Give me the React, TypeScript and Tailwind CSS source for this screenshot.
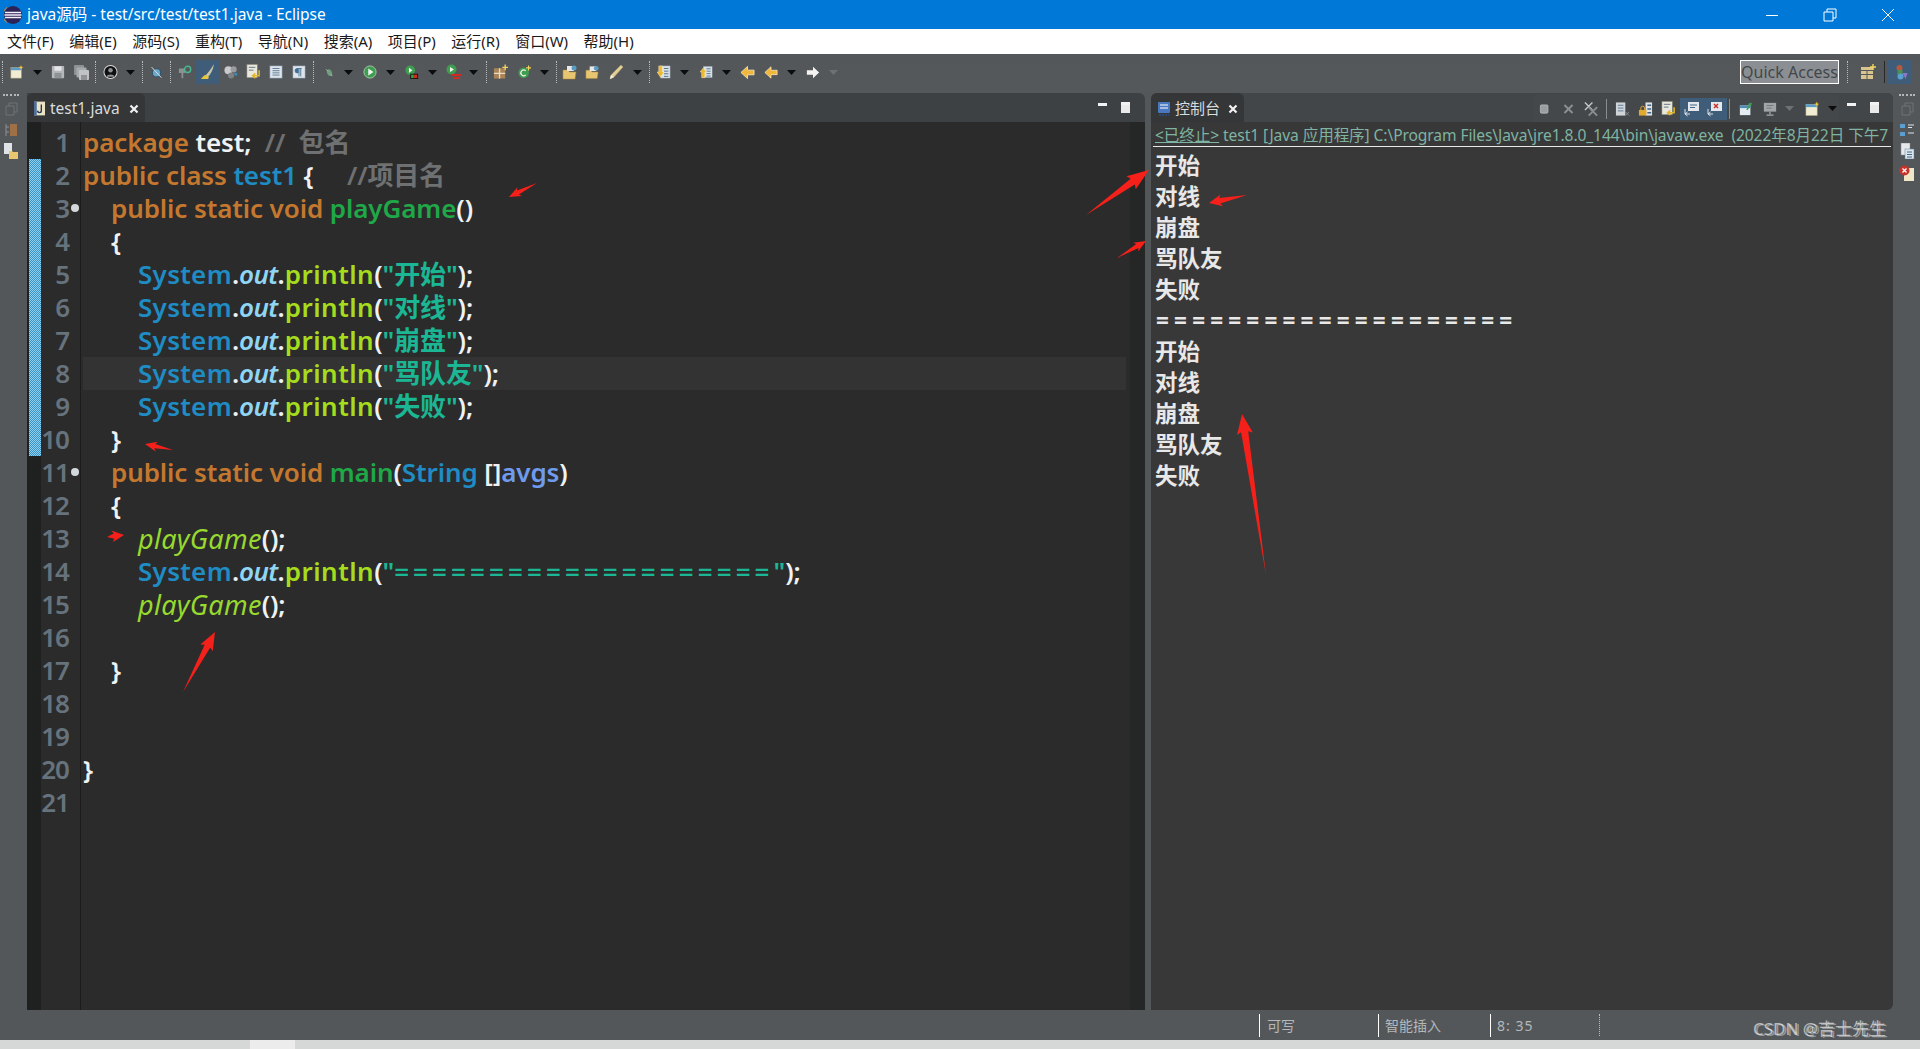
import React from 'react';

const UI = { fontFamily: '"Noto Sans", "Noto Sans CJK SC", sans-serif' };
const CODE = { fontFamily: '"Noto Sans", "Noto Sans CJK SC", sans-serif' };

const kw = 'text-[#c4782f]';
const comment = 'text-[#6e7071]';
const plain = 'text-[#eef2f5]';
const cls = 'text-[#1f8cc4]';
const sys = 'text-[#1f8cc4] tracking-[0.300px]';
const method = 'text-[#1fa748]';
const field = 'italic text-[#8fd6f4] tracking-[-0.600px]';
const println = 'text-[#a6dc1e] tracking-[0.500px]';
const str = 'text-[#1bb795]';
const strWide = 'text-[#1bb795] tracking-[4.100px]';
const call = 'italic font-normal text-[27px] tracking-[0.300px] text-[#97d92f]';
const param = 'text-[#6f9bee]';

type Tok = [string, string];

const printLine = (s: string, c = str): Tok[] => [
  ['System', sys],
  ['.', plain],
  ['out', field],
  ['.', plain],
  ['println', println],
  ['(', plain],
  ['"', str],
  [s, c],
  ['"', str],
  [');', plain],
];

const lines: { indent: number; toks: Tok[]; fold?: boolean; current?: boolean }[] = [
  { indent: 0, toks: [['package ', kw], ['test;', plain], ['  //  包名', comment]] },
  { indent: 0, toks: [['public class ', kw], ['test1', cls], [' {', plain], ['     //项目名', comment]] },
  { indent: 1, fold: true, toks: [['public static void ', kw], ['playGame', method], ['()', plain]] },
  { indent: 1, toks: [['{', plain]] },
  { indent: 2, toks: printLine('开始') },
  { indent: 2, toks: printLine('对线') },
  { indent: 2, toks: printLine('崩盘') },
  { indent: 2, current: true, toks: printLine('骂队友') },
  { indent: 2, toks: printLine('失败') },
  { indent: 1, toks: [['}', plain]] },
  { indent: 1, fold: true, toks: [['public static void ', kw], ['main', method], ['(', plain], ['String', cls], [' []', plain], ['avgs', param], [')', plain]] },
  { indent: 1, toks: [['{', plain]] },
  { indent: 2, toks: [['playGame', call], ['();', plain]] },
  { indent: 2, toks: printLine('====================', strWide) },
  { indent: 2, toks: [['playGame', call], ['();', plain]] },
  { indent: 0, toks: [] },
  { indent: 1, toks: [['}', plain]] },
  { indent: 0, toks: [] },
  { indent: 0, toks: [] },
  { indent: 0, toks: [['}', plain]] },
  { indent: 0, toks: [] },
];

const menus = ['文件(F)', '编辑(E)', '源码(S)', '重构(T)', '导航(N)', '搜索(A)', '项目(P)', '运行(R)', '窗口(W)', '帮助(H)'];
const output = ['开始', '对线', '崩盘', '骂队友', '失败'];

const Svg = ({ className = '', children }: { className?: string; children: React.ReactNode }) => (
  <svg viewBox="0 0 16 16" className={'h-[16px] shrink-0 ' + className}>
    {children}
  </svg>
);

const Dots = ({ className = '' }: { className?: string }) => (
  <div className={'h-[22px] w-px shrink-0 border-l border-dotted border-[#b9bdc0] ' + className} />
);

const Drop = ({ className = '', gray }: { className?: string; gray?: boolean }) => (
  <svg viewBox="0 0 9 5" className={'h-[5px] w-[9px] shrink-0 ' + className}>
    <path d="M0 0h9L4.5 5z" fill={gray ? '#6d7174' : '#0c0c0c'} />
  </svg>
);

// generic toolbar drawings
const NewFile = ({ className }: { className?: string }) => (
  <Svg className={className}>
    <rect x="1" y="3" width="12" height="12" fill="#f2ecd2" stroke="#a9a27e" strokeWidth=".6" />
    <rect x="1" y="3" width="12" height="3" fill="#5d9cc6" />
    <path d="M12.5 0l.8 2 2 .7-2 .8-.8 2-.7-2-2-.8 2-.7z" fill="#f4c63d" />
  </Svg>
);
const Save = ({ className }: { className?: string }) => (
  <Svg className={className}>
    <rect x="1" y="1" width="14" height="14" rx="1" fill="#b5b8ba" />
    <rect x="4" y="1.5" width="8" height="5" fill="#e4e5e6" />
    <rect x="4" y="9" width="8" height="6" fill="#8f9294" />
  </Svg>
);
const SaveAll = ({ className }: { className?: string }) => (
  <Svg className={className}>
    <rect x="1" y="1" width="10" height="10" rx="1" fill="#8e9193" />
    <rect x="3.5" y="3.5" width="10" height="10" rx="1" fill="#a7aaac" />
    <rect x="6" y="6" width="10" height="10" rx="1" fill="#c0c2c4" />
    <rect x="8" y="11" width="6" height="5" fill="#8f9294" />
  </Svg>
);
const Avatar = ({ className }: { className?: string }) => (
  <Svg className={className}>
    <circle cx="8" cy="8" r="7.5" fill="#d8dadb" />
    <circle cx="8" cy="8" r="6.5" fill="#101010" />
    <circle cx="8" cy="6" r="2.4" fill="#8d8f91" />
    <path d="M3.5 13c1-3 8-3 9 0z" fill="#8d8f91" />
  </Svg>
);
const Skip = ({ className }: { className?: string }) => (
  <Svg className={className}>
    <circle cx="8" cy="9" r="5" fill="#6ea6c8" stroke="#1f4a69" />
    <path d="M2 2l12 13" stroke="#d6dde2" strokeWidth="1.2" />
  </Svg>
);
const Tele = ({ className }: { className?: string }) => (
  <Svg className={className}>
    <path d="M1 4h7v5H6v6H4V9H1z" fill="#8d9092" />
    <circle cx="11" cy="5" r="3.5" fill="none" stroke="#48b98f" strokeWidth="1.6" />
  </Svg>
);
const Brush = ({ className }: { className?: string }) => (
  <Svg className={className}>
    <path d="M14 0C11 5 8 9 5 12l2 2C11 10 13 6 14 0z" fill="#c8c4a8" />
    <path d="M5 11c-2 1-3 3-4 4h7l1-2z" fill="#e8c63a" />
  </Svg>
);
const Sheep = ({ className }: { className?: string }) => (
  <Svg className={className}>
    <circle cx="5" cy="6" r="4.5" fill="#c8cacc" />
    <circle cx="11" cy="5" r="3.5" fill="#9a9da0" />
    <circle cx="8" cy="12" r="3.5" fill="#7f8285" />
    <rect x="12" y="9" width="3" height="3" fill="#3d8fb8" />
  </Svg>
);
const DocArrow = ({ className }: { className?: string }) => (
  <Svg className={className}>
    <rect x="1" y="0" width="11" height="14" fill="#e9e8dc" stroke="#8b8a7c" strokeWidth=".6" />
    <path d="M3 3h7M3 6h5" stroke="#5f6f88" />
    <path d="M14 6v6H8M10 9.5L7 12l3 2.5" fill="none" stroke="#e2b62c" strokeWidth="1.6" />
  </Svg>
);
const Lines = ({ className }: { className?: string }) => (
  <Svg className={className}>
    <rect x="1" y="1" width="14" height="14" fill="#dfe4ea" stroke="#6f8598" strokeWidth=".6" />
    <path d="M4 4h8M4 6.5h8M4 9h8M4 11.5h8" stroke="#4f7394" />
  </Svg>
);
const Pilcrow = ({ className }: { className?: string }) => (
  <Svg className={className}>
    <rect x="1" y="1" width="14" height="14" fill="#dfe4ea" stroke="#6f8598" strokeWidth=".6" />
    <path d="M7 4H6a2.500 2.500 0 0 0 0 5h1zM7 4h4M8 4v9M10 4v9" fill="#3f6e94" stroke="#3f6e94" />
  </Svg>
);
const Bug = ({ className }: { className?: string }) => (
  <Svg className={className}>
    <ellipse cx="8" cy="9" rx="3.500" ry="5" transform="rotate(-25 8 9)" fill="#6f9e7e" />
    <path d="M3 4l3 3M12 14l-2-3" stroke="#c4d3c9" />
  </Svg>
);
const Run = ({ className }: { className?: string }) => (
  <Svg className={className}>
    <circle cx="8" cy="8" r="7" fill="#3f9d50" stroke="#c9dcc9" strokeWidth=".8" />
    <path d="M6 4l6 4-6 4z" fill="#f1f4ee" />
  </Svg>
);
const Coverage = ({ className }: { className?: string }) => (
  <Svg className={className}>
    <circle cx="6" cy="6" r="5.500" fill="#3f9d50" />
    <path d="M4.500 3l4 3-4 3z" fill="#f1f4ee" />
    <rect x="6" y="10" width="9" height="6" fill="#111" />
    <rect x="7" y="11" width="3" height="4" fill="#2cab3d" />
    <rect x="10" y="11" width="4" height="4" fill="#d12a1e" />
  </Svg>
);
const External = ({ className }: { className?: string }) => (
  <Svg className={className}>
    <circle cx="5.500" cy="5.500" r="5" fill="#3f9d50" />
    <path d="M4 3l4 2.500-4 2.500z" fill="#f1f4ee" />
    <rect x="6" y="10" width="9" height="2" fill="#d12a1e" />
    <rect x="7" y="13" width="7" height="2" fill="#d12a1e" />
  </Svg>
);
const Pkg = ({ className }: { className?: string }) => (
  <Svg className={className}>
    <rect x="1" y="4" width="12" height="11" fill="#a98458" />
    <path d="M7 4v11M1 9.500h12" stroke="#ecdcc0" strokeWidth="1.4" />
    <path d="M13 0v6M10 3h6" stroke="#f4d65c" strokeWidth="1.400" />
  </Svg>
);
const NewClass = ({ className }: { className?: string }) => (
  <Svg className={className}>
    <circle cx="7" cy="9" r="6.500" fill="#3f9d50" />
    <path d="M9.500 6.500a3.500 3.500 0 1 0 0 5" fill="none" stroke="#eef4ea" strokeWidth="1.500" />
    <path d="M13 0v6M10 3h6" stroke="#f4d65c" strokeWidth="1.400" />
  </Svg>
);
const Folder = ({ className }: { className?: string }) => (
  <Svg className={className}>
    <path d="M1 6h5l1.500 2H14l-1 7H1z" fill="#e8c671" stroke="#a8873a" strokeWidth=".5" />
    <rect x="5" y="2" width="7" height="5" fill="#e6e8ea" />
    <circle cx="12" cy="4" r="2.500" fill="#5a9cc0" />
  </Svg>
);
const Pencil = ({ className }: { className?: string }) => (
  <Svg className={className}>
    <path d="M13 1l2 2L6 13l-4 2 1-4z" fill="#e2cf96" stroke="#b9a56c" strokeWidth=".5" />
    <path d="M2 15l1-4 3 2z" fill="#f4f2e8" />
  </Svg>
);
const NoteDown = ({ className, up }: { className?: string; up?: boolean }) => (
  <Svg className={className}>
    <rect x="4" y="1" width="11" height="14" fill="#d9e0e7" stroke="#7c8895" strokeWidth=".5" />
    <path d="M8 4h5M8 7h5M8 10h5M8 13h5" stroke="#44688a" />
    {up ? (
      <path d="M4 3l4 5H6v7H2V8H0z" fill="#edb931" stroke="#fff2c4" strokeWidth=".5" />
    ) : (
      <path d="M2 1h4v7h2l-4 6-4-6h2z" fill="#edb931" stroke="#fff2c4" strokeWidth=".5" />
    )}
  </Svg>
);
const Back = ({ className, color = '#f0b73a' }: { className?: string; color?: string }) => (
  <Svg className={className}>
    <path d="M8 2v4h7v5H8v4L1 8.500z" fill={color} stroke="#fdf1cf" strokeWidth=".8" />
  </Svg>
);
const Forward = ({ className }: { className?: string }) => (
  <Svg className={className}>
    <path d="M8 2v4H1v5h7v4l7-6.500z" fill="#f3f3f3" />
  </Svg>
);
const Perspective = ({ className }: { className?: string }) => (
  <Svg className={className}>
    <rect x="1" y="3" width="12" height="12" fill="#d9c48d" />
    <path d="M1 6.500h12M7 6.500V15M1 10.500h12" stroke="#54585a" />
    <path d="M13 0v6M10 3h6" stroke="#f4d65c" strokeWidth="1.400" />
  </Svg>
);
const JavaPersp = ({ className }: { className?: string }) => (
  <Svg className={className}>
    <circle cx="7" cy="4" r="3" fill="#b9593a" />
    <rect x="5" y="6" width="5" height="5" fill="#4f8f52" />
    <circle cx="8" cy="12.500" r="3" fill="#5aa0d0" />
    <path d="M10 9h5l-2 6z" fill="#8b79c8" />
  </Svg>
);
const Stop = ({ className }: { className?: string }) => (
  <Svg className={className}>
    <rect x="2" y="2" width="11" height="12" rx="1.500" fill="#9b9ea0" stroke="#c3c5c7" />
  </Svg>
);
const Cross = ({ className }: { className?: string }) => (
  <Svg className={className}>
    <path d="M3 3l10 10M13 3L3 13" stroke="#8b8e90" strokeWidth="2.400" />
  </Svg>
);
const CrossAll = ({ className }: { className?: string }) => (
  <Svg className={className}>
    <path d="M1 1l8 8M9 1L1 9" stroke="#c3c5c7" strokeWidth="1.500" />
    <path d="M5 6l9 9M14 6l-9 9" stroke="#8b8e90" strokeWidth="2" />
  </Svg>
);
const DocX = ({ className }: { className?: string }) => (
  <Svg className={className}>
    <rect x="1" y="1" width="10" height="14" fill="#cfd4d9" />
    <path d="M3 4h6M3 7h6M3 10h6" stroke="#5a7a98" />
    <path d="M11 11l4 4M15 11l-4 4" stroke="#8b8e90" />
  </Svg>
);
const DocLock = ({ className }: { className?: string }) => (
  <Svg className={className}>
    <rect x="8" y="1" width="7" height="14" fill="#dfe3e7" />
    <path d="M10 4h4M10 8h4M10 12h4" stroke="#40668a" strokeWidth="1.400" />
    <rect x="1" y="9" width="8" height="6" fill="#e2a92f" />
    <path d="M3 9V7a2 2 0 0 1 4 0v2" fill="none" stroke="#e2a92f" />
  </Svg>
);
const Bubble = ({ className, red }: { className?: string; red?: boolean }) => (
  <Svg className={className}>
    <rect x="4" y="1" width="11" height="9" fill="#e4e8ec" />
    {red ? <path d="M7 3l4 4M11 3L7 7" stroke="#c9302a" strokeWidth="1.500" /> : <path d="M6 4h7M6 6.500h5" stroke="#44688a" />}
    <path d="M1 8v5h5M3.500 11L1 13l2.500 2" fill="none" stroke="#dfe3e7" />
  </Svg>
);
const Pin = ({ className }: { className?: string }) => (
  <Svg className={className}>
    <rect x="1" y="4" width="12" height="11" fill="#e4ecf2" />
    <rect x="1" y="4" width="12" height="3" fill="#4f8eb8" />
    <path d="M9 9l5-8M11 2l3 2" stroke="#3fa05a" strokeWidth="1.800" />
  </Svg>
);
const Monitor = ({ className }: { className?: string }) => (
  <Svg className={className}>
    <rect x="1" y="1" width="14" height="10" fill="#a2a5a7" />
    <path d="M4 4h8M4 7h6" stroke="#6f7275" />
    <path d="M8 11v3M4 15h8" stroke="#a2a5a7" strokeWidth="1.500" />
  </Svg>
);
const Outline = ({ className }: { className?: string }) => (
  <Svg className={className}>
    <rect x="1" y="2" width="5" height="4" fill="#5b9fd0" />
    <rect x="1" y="10" width="5" height="4" fill="#5b9fd0" />
    <path d="M9 3h6M9 5.500h4M9 11h6" stroke="#dfe3e7" />
  </Svg>
);
const Tasks = ({ className }: { className?: string }) => (
  <Svg className={className}>
    <rect x="2" y="0" width="9" height="12" fill="#e6e8ea" stroke="#7f8c98" strokeWidth=".5" />
    <rect x="6" y="6" width="9" height="10" fill="#dde4ea" stroke="#5d7f9c" strokeWidth=".5" />
    <path d="M8 9h5M8 11.500h5M8 14h5" stroke="#3f6a8e" />
  </Svg>
);
const Problems = ({ className }: { className?: string }) => (
  <Svg className={className}>
    <rect x="5" y="3" width="10" height="13" fill="#efe7c6" />
    <circle cx="5.500" cy="5.500" r="5" fill="#c8322b" />
    <path d="M3.500 3.500l4 4M7.500 3.500l-4 4" stroke="#fff" strokeWidth="1.300" />
  </Svg>
);
const Restore = ({ className }: { className?: string }) => (
  <Svg className={className}>
    <path d="M3 5h8v9H3zM6 5V2h8v9h-3" fill="none" stroke="#cfd0d2" strokeWidth=".9" />
  </Svg>
);
const JFile = () => (
  <svg viewBox="0 0 12 15" className="h-[15px] w-[11px] shrink-0">
    <rect width="12" height="15" fill="#e9e3c4" />
    <rect width="3" height="15" fill="#4c6f9c" />
    <path d="M8 3v7a2 2 0 0 1-4 0" fill="none" stroke="#23344d" strokeWidth="1.500" />
  </svg>
);
const ConsoleIcon = () => (
  <svg viewBox="0 0 12 14" className="h-[14px] w-[12px] shrink-0">
    <rect width="12" height="11" rx="1" fill="#4a78c0" />
    <path d="M2 3h8M2 6h8" stroke="#fff" strokeWidth="1.200" />
    <path d="M1 13h10" stroke="#2c4f86" strokeWidth="1.500" strokeDasharray="2 1" />
  </svg>
);
const CloseX = ({ className = '' }: { className?: string }) => (
  <svg viewBox="0 0 10 10" className={'h-[10px] w-[10px] shrink-0 ' + className}>
    <path d="M1.500 1.500l7 7M8.500 1.500l-7 7" stroke="#f1f1f1" strokeWidth="2.200" />
  </svg>
);
const MinMax = ({ className = '' }: { className?: string }) => (
  <div className={'flex items-center ' + className}>
    <div className="h-[3px] w-[9px] bg-[#f2f2f2] -translate-y-[3px]" />
    <div className="ml-[14px] h-[11px] w-[9px] border-t-[3px] border-[#f2f2f2] bg-[#e9e9e9]" />
  </div>
);

// red annotation arrow drawn from tail to tip
const Arrow = ({ tip, tail, head = 14, barb = 5 }: { tip: [number, number]; tail: [number, number]; head?: number; barb?: number }) => {
  const dx = tip[0] - tail[0];
  const dy = tip[1] - tail[1];
  const len = Math.hypot(dx, dy);
  const ux = dx / len;
  const uy = dy / len;
  const bx = tip[0] - ux * head;
  const by = tip[1] - uy * head;
  const nx = bx + ux * 2;
  const ny = by + uy * 2;
  const pts = [
    tail,
    [nx - uy * barb * 0.45, ny + ux * barb * 0.45],
    [bx - uy * barb, by + ux * barb],
    tip,
    [bx + uy * barb, by - ux * barb],
    [nx + uy * barb * 0.45, ny - ux * barb * 0.45],
  ];
  return <polygon points={pts.map((p) => p.join(',')).join(' ')} fill="#f5201a" />;
};

const Trim = ({ children, className = '' }: { children: React.ReactNode; className?: string }) => (
  <div className={'flex w-[27px] shrink-0 flex-col items-center pt-[1px] ' + className}>
    <div className="h-[4px] w-[16px] border-t-2 border-dotted border-[#b5b8ba]" />
    {children}
  </div>
);

export default function App() {
  return (
    <div className="relative flex h-[1049px] w-[1920px] flex-col overflow-hidden bg-[#53575a]" style={UI}>
      {/* title bar */}
      <div className="flex h-[29px] shrink-0 items-center bg-[#0078d7] pl-[4px] text-[15.500px] text-white">
        <svg viewBox="0 0 18 18" className="h-[18px] w-[18px] shrink-0">
          <circle cx="9" cy="9" r="9" fill="#2c2255" />
          <path d="M1 6.500h16M.5 9h17M1 11.500h16" stroke="#f2eefc" strokeWidth="1.300" />
          <path d="M3 1.500A9 9 0 0 0 3 16.500" fill="none" stroke="#e08a3c" strokeWidth="1" />
        </svg>
        <span className="ml-[5px]">java源码 - test/src/test/test1.java - Eclipse</span>
        <div className="ml-auto flex pr-[3px]">
          <div className="flex w-[58px] justify-center">
            <div className="mt-[7px] h-px w-[12px] bg-white" />
          </div>
          <div className="flex w-[58px] justify-center">
            <svg viewBox="0 0 14 14" className="h-[14px] w-[14px]">
              <path d="M1 4h9v9H1zM4 4V1h9v9h-3" fill="none" stroke="#fff" />
            </svg>
          </div>
          <div className="flex w-[58px] justify-center">
            <svg viewBox="0 0 14 14" className="h-[14px] w-[14px]">
              <path d="M1 1l12 12M13 1L1 13" stroke="#fff" />
            </svg>
          </div>
        </div>
      </div>

      {/* menu bar */}
      <div className="flex h-[25px] shrink-0 items-center gap-[15.500px] bg-white pl-[7px] text-[15px] text-[#1a1a1a]">
        {menus.map((m) => (
          <span key={m}>{m}</span>
        ))}
      </div>

      {/* workbench toolbar */}
      <div className="flex h-[39px] shrink-0 items-center bg-gradient-to-b from-[#54575a] to-[#55585a] pl-[2px] pb-[3px]">
        <Dots />
        <NewFile className="ml-[7px] w-[14px]" />
        <Drop className="ml-[9px]" />
        <Save className="ml-[9px] w-[14px]" />
        <SaveAll className="ml-[8px] w-[16px]" />
        <Dots className="ml-[6px]" />
        <Avatar className="ml-[7px] w-[15px]" />
        <Drop className="ml-[8px]" />
        <Dots className="ml-[7px]" />
        <Skip className="ml-[7px] w-[13px]" />
        <Dots className="ml-[7px]" />
        <Tele className="ml-[7px] w-[14px]" />
        <div className="ml-[4px] flex h-[24px] w-[24px] items-center justify-center bg-[#3f5c78]">
          <Brush className="w-[16px]" />
        </div>
        <Sheep className="ml-[4px] w-[14px]" />
        <DocArrow className="ml-[8px] w-[15px]" />
        <Lines className="ml-[8px] w-[14px]" />
        <Pilcrow className="ml-[9px] w-[14px]" />
        <Dots className="ml-[7px]" />
        <Bug className="ml-[10px] w-[11px]" />
        <Drop className="ml-[9px]" />
        <Run className="ml-[10px] w-[14px]" />
        <Drop className="ml-[9px]" />
        <Coverage className="ml-[10px] w-[14px]" />
        <Drop className="ml-[9px]" />
        <External className="ml-[9px] w-[16px]" />
        <Drop className="ml-[7px]" />
        <Dots className="ml-[8px]" />
        <Pkg className="ml-[6px] w-[15px]" />
        <NewClass className="ml-[10px] w-[13px]" />
        <Drop className="ml-[9px]" />
        <Dots className="ml-[7px]" />
        <Folder className="ml-[5px] w-[16px]" />
        <Folder className="ml-[7px] w-[15px]" />
        <Pencil className="ml-[8px] w-[16px]" />
        <Drop className="ml-[9px]" />
        <Dots className="ml-[7px]" />
        <NoteDown className="ml-[7px] w-[14px]" />
        <Drop className="ml-[9px]" />
        <NoteDown up className="ml-[11px] w-[13px]" />
        <Drop className="ml-[9px]" />
        <Back className="ml-[9px] w-[15px]" />
        <Back className="ml-[9px] w-[14px]" />
        <Drop className="ml-[9px]" />
        <Forward className="ml-[10px] w-[14px]" />
        <Drop gray className="ml-[9px]" />
        <div className="ml-auto flex h-[24px] w-[99px] items-center justify-center border border-white bg-[#8b8f93] text-[16px] text-[#43474a]">
          Quick Access
        </div>
        <Dots className="ml-[8px]" />
        <Perspective className="ml-[12px] w-[16px]" />
        <div className="ml-[8px] h-[22px] w-px bg-[#26282a]" />
        <div className="ml-[3px] mr-[8px] flex h-[24px] w-[24px] items-center justify-center bg-[#3f5c78]">
          <JavaPersp className="w-[17px]" />
        </div>
      </div>

      {/* panels */}
      <div className="flex h-[917px] shrink-0">
        <Trim className="pr-[6px]">
          <Restore className="mt-[3px] opacity-25" />
          <svg viewBox="0 0 16 16" className="mt-[5px] h-[16px] w-[16px]">
            <path d="M3 2v12M3 5h3M3 10h3" stroke="#8f9294" />
            <rect x="7" y="2" width="7" height="12" fill="#c07a3c" opacity=".7" />
          </svg>
          <svg viewBox="0 0 16 16" className="mt-[5px] h-[16px] w-[16px]">
            <rect x="1" y="0" width="8" height="11" fill="#dfe3e7" />
            <path d="M6 8h3l1 1h5v7H6z" fill="#e8c671" />
          </svg>
        </Trim>

        {/* editor */}
        <div className="flex w-[1118px] shrink-0 flex-col overflow-hidden rounded-tr-md">
          <div className="flex h-[29px] shrink-0 items-stretch justify-between bg-[#3e4143]">
            <div className="flex w-[118px] items-center rounded-t-md bg-[#343638] pl-[7px] pt-[2px]">
              <JFile />
              <span className="ml-[5px] text-[15.500px] text-[#d8dcdf]">test1.java</span>
              <CloseX className="ml-[9px]" />
            </div>
            <MinMax className="pr-[15px]" />
          </div>
          <div className="flex min-h-0 flex-1 bg-[#2b2b2b]" style={CODE}>
            <div className="w-[14px] shrink-0 bg-[#1f2020] pt-[37px] pl-[2px]">
              <div className="h-[297px] w-[12px] bg-[repeating-conic-gradient(#3a93c4_0_25%,#8fd0ec_0_50%)] bg-[length:2px_2px]" />
            </div>
            <div className="w-[40px] shrink-0 border-r border-[#1c1c1c] pt-[3.500px]">
              {lines.map((l, i) => (
                <div key={i} className="flex h-[33px] items-center justify-end pr-[1px]">
                  <span className="text-[26px] font-semibold leading-none tracking-[-1px] text-[#66737d]">{i + 1}</span>
                  <span className="flex w-[10px] justify-end">
                    {l.fold && <span className="h-[8px] w-[8px] rounded-full bg-[#d5d8da]" />}
                  </span>
                </div>
              ))}
            </div>
            <div className="min-w-0 flex-1 pt-[3.500px] pl-[2px] pr-[4px]">
              {lines.map((l, i) => (
                <div
                  key={i}
                  className={
                    'flex h-[33px] items-center whitespace-pre text-[26px] font-semibold leading-none tracking-[-0.100px] ' +
                    (l.current ? 'bg-[#333333] ' : '') +
                    (l.indent === 1 ? 'pl-[28px]' : l.indent === 2 ? 'pl-[55px]' : 'pl-0')
                  }
                >
                  {l.toks.map(([t, c], j) => (
                    <span key={j} className={c}>
                      {t}
                    </span>
                  ))}
                </div>
              ))}
            </div>
            <div className="w-[15px] shrink-0 bg-[#252626]" />
          </div>
        </div>

        <div className="w-[6px] shrink-0" />

        {/* console */}
        <div className="flex w-[742px] shrink-0 flex-col overflow-hidden rounded-t-md rounded-br-md bg-[#383838]">
          <div className="flex h-[29px] shrink-0 items-stretch bg-[#434648]">
            <div className="flex w-[93px] items-center rounded-t-md bg-[#343638] pl-[7px] pt-[2px]">
              <ConsoleIcon />
              <span className="ml-[5px] text-[15px] text-[#d8dcdf]">控制台</span>
              <CloseX className="ml-[8px]" />
            </div>
            <div className="ml-[289px] flex h-[27px] w-[306px] items-center self-end rounded-t-sm bg-[#45484a] pl-[6px]">
              <Stop className="w-[11px]" />
              <Cross className="ml-[12px] w-[13px]" />
              <CrossAll className="ml-[9px] w-[15px]" />
              <div className="ml-[7px] h-[20px] w-px bg-[#8a8d90]" />
              <DocX className="ml-[8px] w-[15px]" />
              <DocLock className="ml-[8px] w-[15px]" />
              <DocArrow className="ml-[8px] w-[15px]" />
              <div className="ml-[4px] flex h-[22px] w-[47px] items-center justify-between bg-[#3f5c78] px-[4px]">
                <Bubble className="w-[16px]" />
                <Bubble red className="w-[16px]" />
              </div>
              <div className="ml-[2px] h-[20px] w-px bg-[#8a8d90]" />
              <Pin className="ml-[9px] w-[14px]" />
              <Monitor className="ml-[10px] w-[14px]" />
              <Drop gray className="ml-[8px]" />
              <NewFile className="ml-[11px] w-[15px]" />
              <Drop className="ml-[8px]" />
            </div>
            <MinMax className="ml-[8px]" />
          </div>
          <div className="mx-[2px] flex h-[25px] shrink-0 items-center whitespace-pre border-b border-[#e8e8e8] pl-[2px] pt-[3px] text-[15.600px] tracking-[-0.100px] text-[#7fb3a2]">
            <span className="underline">&lt;已终止&gt;</span>
            <span> test1 [Java 应用程序] C:\Program Files\Java\jre1.8.0_144\bin\javaw.exe  (2022年8月22日 下午7</span>
          </div>
          <div className="pl-[4px] pt-[3px] text-[22.500px] font-bold leading-[31px] text-[#e8e8e8]">
            {output.map((o) => (
              <div key={o + '1'} className="h-[31px]">
                {o}
              </div>
            ))}
            <div className="h-[31px] pl-[1px] tracking-[5.200px]">====================</div>
            {output.map((o) => (
              <div key={o + '2'} className="h-[31px]">
                {o}
              </div>
            ))}
          </div>
        </div>

        <Trim>
          <Restore className="mt-[3px] opacity-25" />
          <Outline className="mt-[5px] w-[16px]" />
          <Tasks className="mt-[5px] w-[16px]" />
          <Problems className="mt-[6px] w-[16px]" />
        </Trim>
      </div>

      {/* status bar */}
      <div className="relative flex h-[30px] shrink-0 items-center text-[14px] text-[#b4b8bb]">
        <div className="ml-[1259px] flex h-[23px] w-[119px] items-center border-l border-white pl-[7px]">可写</div>
        <div className="flex h-[23px] w-[112px] items-center border-l border-white pl-[6px]">智能插入</div>
        <div className="flex h-[23px] w-[109px] items-center border-l border-white pl-[6px] tracking-[1px]">8: 35</div>
        <Dots />
        <div className="absolute left-[1753px] top-[6px] text-[17px] text-white/60">CSDN @吉士先生</div>
        <div className="absolute left-[1755px] top-[7px] text-[17px] text-white/40">CSDN @吉士先生</div>
      </div>

      {/* taskbar edge */}
      <div className="flex h-[9px] shrink-0 bg-[#d6d7d7] pl-[250px]">
        <div className="h-full w-[45px] bg-[#ececec]" />
      </div>

      {/* hand drawn annotations */}
      <svg viewBox="0 0 1920 1049" className="pointer-events-none absolute inset-0 h-[1049px] w-[1920px]">
        <Arrow tip={[509, 197]} tail={[537, 183]} head={12} barb={5} />
        <Arrow tip={[1149, 170]} tail={[1086, 215]} head={22} barb={8} />
        <Arrow tip={[1209, 203]} tail={[1247, 195]} head={13} barb={6} />
        <Arrow tip={[1146, 241]} tail={[1117, 258]} head={12} barb={5} />
        <Arrow tip={[145, 444]} tail={[173, 450]} head={12} barb={5} />
        <Arrow tip={[124, 535]} tail={[107, 537]} head={12} barb={6} />
        <Arrow tip={[215, 632]} tail={[183, 692]} head={18} barb={7} />
        <Arrow tip={[1242, 414]} tail={[1266, 575]} head={20} barb={8} />
      </svg>
    </div>
  );
}
